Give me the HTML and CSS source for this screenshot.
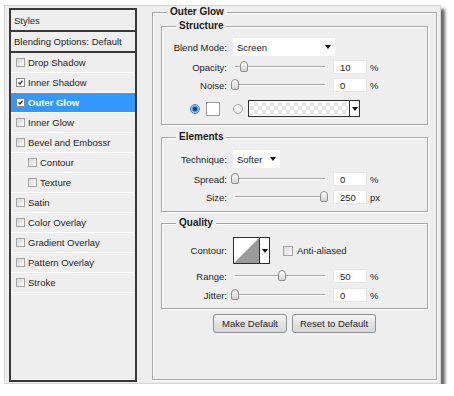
FILE: index.html
```html
<!DOCTYPE html>
<html lang="en">
<head>
    <meta charset="UTF-8">
    <title>Layer Style - Outer Glow</title>
    <link rel="stylesheet" href="styles.css">
</head>
<body>
    <div class="dialog">
        <ul class="style-list">
            <li class="list-head">Styles</li>
            <li class="list-head">Blending Options: Default</li>
            <li><span class="check"></span>Drop Shadow</li>
            <li><span class="check on"><svg viewBox="0 0 9 9"><polyline points="2,4.5 3.8,6.5 7,2.2"/></svg></span>Inner Shadow</li>
            <li class="selected"><span class="check on"><svg viewBox="0 0 9 9"><polyline points="2,4.5 3.8,6.5 7,2.2"/></svg></span>Outer Glow</li>
            <li><span class="check"></span>Inner Glow</li>
            <li><span class="check"></span>Bevel and Embossr</li>
            <li class="sub"><span class="check"></span>Contour</li>
            <li class="sub"><span class="check"></span>Texture</li>
            <li><span class="check"></span>Satin</li>
            <li><span class="check"></span>Color Overlay</li>
            <li><span class="check"></span>Gradient Overlay</li>
            <li><span class="check"></span>Pattern Overlay</li>
            <li><span class="check"></span>Stroke</li>
        </ul>

        <div class="settings">
            <fieldset class="group outer">
                <legend>Outer Glow</legend>

                <fieldset class="group structure">
                    <legend>Structure</legend>
                    <div class="row">
                        <span class="lbl">Blend Mode:</span>
                        <div class="select blend">Screen<span class="arrow"></span></div>
                    </div>
                    <div class="row">
                        <span class="lbl">Opacity:</span>
                        <div class="slider"><span class="thumb" style="left:10%"></span></div>
                        <span class="num">10</span><span class="unit">%</span>
                    </div>
                    <div class="row">
                        <span class="lbl">Noise:</span>
                        <div class="slider"><span class="thumb" style="left:0%"></span></div>
                        <span class="num">0</span><span class="unit">%</span>
                    </div>
                    <div class="row colors">
                        <span class="radio on"></span>
                        <span class="swatch"></span>
                        <span class="radio"></span>
                        <div class="gradient-pick"><span class="checker"></span><span class="drop"><span class="arrow"></span></span></div>
                    </div>
                </fieldset>

                <fieldset class="group elements">
                    <legend>Elements</legend>
                    <div class="row">
                        <span class="lbl">Technique:</span>
                        <div class="select technique">Softer<span class="arrow"></span></div>
                    </div>
                    <div class="row">
                        <span class="lbl">Spread:</span>
                        <div class="slider"><span class="thumb" style="left:0%"></span></div>
                        <span class="num">0</span><span class="unit">%</span>
                    </div>
                    <div class="row">
                        <span class="lbl">Size:</span>
                        <div class="slider"><span class="thumb" style="left:99%"></span></div>
                        <span class="num">250</span><span class="unit">px</span>
                    </div>
                </fieldset>

                <fieldset class="group quality">
                    <legend>Quality</legend>
                    <div class="row">
                        <span class="lbl">Contour:</span>
                        <div class="contour">
                            <svg class="curve" viewBox="0 0 25 25"><polygon points="0,25 25,0 25,25"/></svg>
                            <span class="drop"><span class="arrow"></span></span>
                        </div>
                        <span class="check aa"></span>
                        <span class="aa-text">Anti-aliased</span>
                    </div>
                    <div class="row">
                        <span class="lbl">Range:</span>
                        <div class="slider"><span class="thumb" style="left:52%"></span></div>
                        <span class="num">50</span><span class="unit">%</span>
                    </div>
                    <div class="row">
                        <span class="lbl">Jitter:</span>
                        <div class="slider"><span class="thumb" style="left:0%"></span></div>
                        <span class="num">0</span><span class="unit">%</span>
                    </div>
                </fieldset>

                <div class="buttons">
                    <button class="btn make">Make Default</button>
                    <button class="btn reset">Reset to Default</button>
                </div>
            </fieldset>
        </div>
    </div>
</body>
</html>
```

FILE: styles.css
```css
* {
    margin: 0;
    padding: 0;
    box-sizing: border-box;
}

body {
    background: #ffffff;
    font-family: "Liberation Sans", Arial, sans-serif;
    font-size: 9.5px;
    color: #1e1e1e;
}

.dialog {
    display: flex;
    align-items: flex-start;
    width: 437px;
    height: 379px;
    margin: 5px 0 0 4px;
    padding: 0 0 0 4px;
    background: #eeeeee;
    border: 1px solid #d4d4d4;
    box-shadow: 4px 4px 3px rgba(0, 0, 0, 0.6);
}

/* left list */

.style-list {
    list-style: none;
    width: 128px;
    height: 374px;
    margin-top: 2px;
    border: 2px solid #383838;
    background: #eeeeee;
}

.style-list li {
    display: flex;
    align-items: center;
    height: 20px;
    padding-left: 5px;
    border-bottom: 1px solid #ffffff;
    white-space: nowrap;
}

.style-list li.list-head {
    height: 21px;
    padding-left: 3px;
    border-bottom: 2px solid #383838;
}

.style-list li.list-head:first-child {
    height: 22px;
}

.style-list li.sub {
    padding-left: 17px;
}

.style-list li.selected {
    background: #3399ff;
    color: #ffffff;
    font-weight: bold;
}

.check {
    display: inline-block;
    flex: none;
    width: 9px;
    height: 9px;
    margin-right: 3px;
    border: 1px solid #a4a4a4;
    background: linear-gradient(135deg, #d6d6d6, #fbfbfb);
}

.check.on {
    background: #ffffff;
    border-color: #8a8a8a;
}

.check svg {
    display: block;
    width: 7px;
    height: 7px;
}

.check polyline {
    fill: none;
    stroke: #2a2a2a;
    stroke-width: 1.6;
}

/* right settings */

.settings {
    margin-left: 15px;
}

.group {
    border: 1px solid #a6a6a6;
    box-shadow: 1px 1px 0 #ffffff, inset 1px 1px 0 #ffffff;
    padding: 0 8px;
    min-width: 0;
}

.group legend {
    margin-left: 6px;
    padding: 0 3px;
    font-size: 10px;
    font-weight: bold;
    line-height: 12px;
    color: #1a1a1a;
    background: #eeeeee;
}

.outer {
    width: 285px;
    height: 374px;
    padding-top: 2px;
}

.structure {
    padding-top: 6px;
    padding-bottom: 7px;
}

.elements {
    margin-top: 6px;
    padding-top: 7px;
    padding-bottom: 7px;
}

.quality {
    margin-top: 5px;
    padding-top: 8px;
    padding-bottom: 6px;
}

.row {
    display: flex;
    align-items: center;
}

.row + .row {
    margin-top: 4px;
}

.quality .row + .row {
    margin-top: 5px;
}

.lbl {
    width: 57px;
    margin-right: 6px;
    text-align: right;
    white-space: nowrap;
}

.select {
    display: flex;
    align-items: center;
    justify-content: space-between;
    height: 18px;
    padding: 0 4px;
    background: #ffffff;
}

.blend {
    width: 102px;
}

.technique {
    width: 47px;
}

.arrow {
    width: 0;
    height: 0;
    border-left: 3px solid transparent;
    border-right: 3px solid transparent;
    border-top: 4px solid #111111;
}

.slider {
    position: relative;
    width: 90px;
    height: 14px;
    margin-left: 2px;
    background: linear-gradient(#a8a8a8, #a8a8a8) 0 6px / 100% 1px no-repeat,
                linear-gradient(#ffffff, #ffffff) 0 7px / 100% 1px no-repeat;
}

.thumb {
    position: absolute;
    top: 1px;
    width: 8px;
    height: 11px;
    margin-left: -4px;
    border: 1px solid #8c8c8c;
    border-radius: 4px 4px 2px 2px;
    background: linear-gradient(#ffffff, #d2d2d2);
}

.num {
    width: 34px;
    height: 14px;
    margin-left: 8px;
    padding-left: 6px;
    line-height: 13px;
    background: #ffffff;
    border: 1px solid #e6e6e6;
    color: #1b2233;
}

.unit {
    margin-left: 3px;
}

.colors {
    margin-left: 20px;
}

.row.colors {
    margin-top: 8px;
}

.radio {
    width: 10px;
    height: 10px;
    border-radius: 50%;
    border: 1px solid #a9a9a9;
    background: radial-gradient(circle at 40% 40%, #ffffff, #d9d9d9);
}

.radio.on {
    border-color: #4d82b8;
    background: radial-gradient(circle, #163f6e 0 1.5px, #4b98dc 2.5px, #bfe0fa 4.5px);
}

.swatch {
    width: 14px;
    height: 14px;
    margin-left: 6px;
    margin-right: 13px;
    background: #ffffff;
    border: 1px solid #9a9a9a;
}

.gradient-pick {
    display: flex;
    width: 112px;
    height: 17px;
    margin-left: 5px;
    border: 1px solid #2e2e2e;
    background: #ffffff;
}

.checker {
    flex: 1;
    margin: 1px;
    background: repeating-conic-gradient(#e4e4e4 0 25%, #ffffff 0 50%) 0 0 / 8px 8px;
}

.drop {
    display: flex;
    align-items: center;
    justify-content: center;
    width: 10px;
    border-left: 1px solid #2e2e2e;
    background: #ffffff;
}

.contour {
    display: flex;
    width: 37px;
    height: 27px;
    border: 1px solid #2e2e2e;
    background: #ffffff;
}

.curve {
    display: block;
    width: 25px;
    height: 25px;
}

.curve polygon {
    fill: #9a9a9a;
}

.check.aa {
    width: 10px;
    height: 10px;
    margin-left: 13px;
    margin-right: 4px;
}

.buttons {
    display: flex;
    justify-content: center;
    gap: 5px;
    margin-top: 5px;
}

.btn {
    height: 19px;
    font-family: "Liberation Sans", Arial, sans-serif;
    font-size: 9.5px;
    color: #1e1e1e;
    border: 1px solid #8f8f8f;
    border-radius: 3px;
    background: linear-gradient(#f7f7f7, #e2e2e2 50%, #d6d6d6);
}

.make {
    width: 74px;
}

.reset {
    width: 84px;
}
```
